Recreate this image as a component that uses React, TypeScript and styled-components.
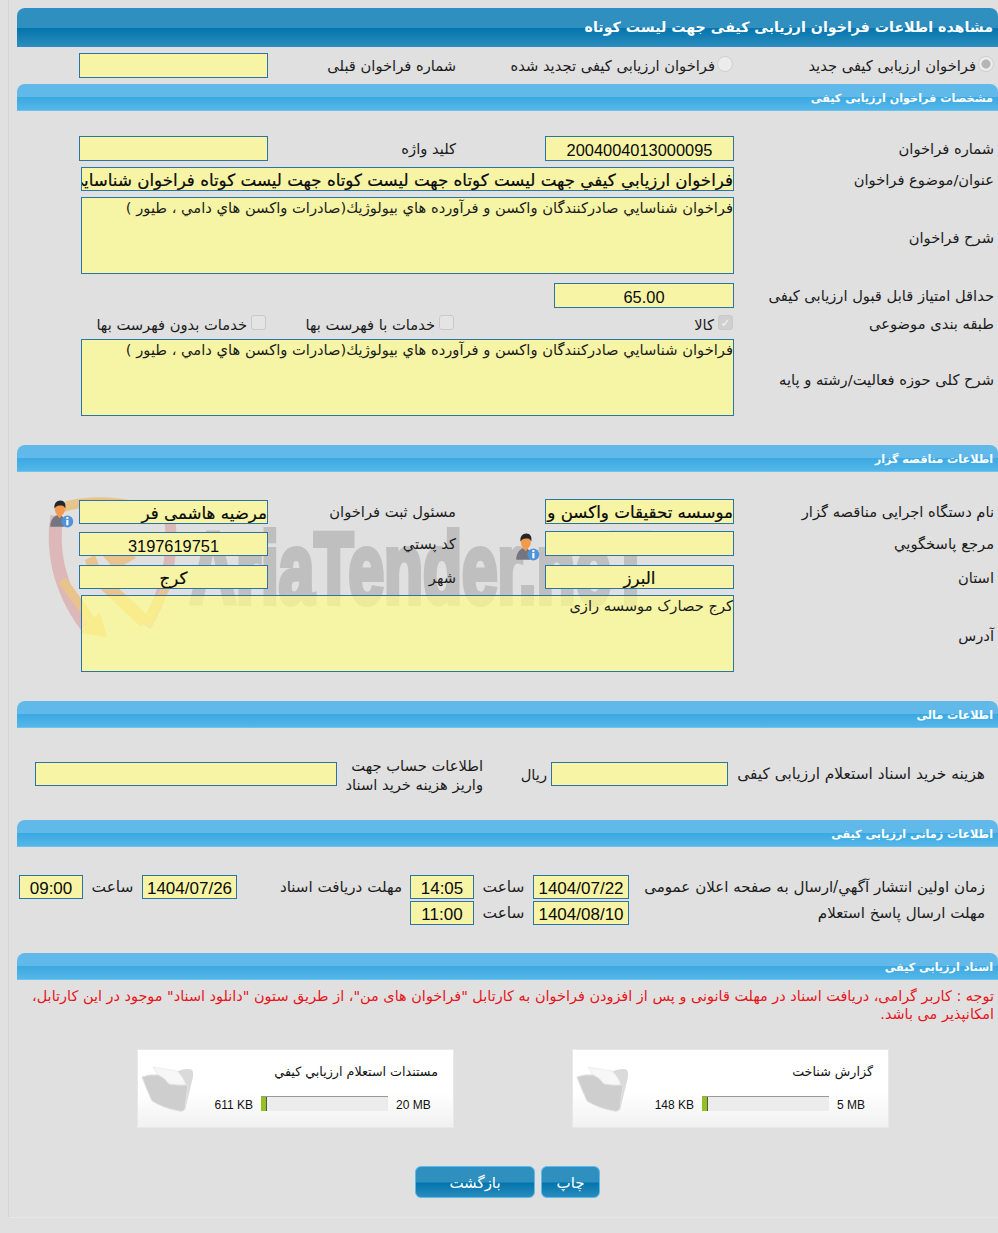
import React from "react";
import styled, { createGlobalStyle } from "styled-components";

const Global = createGlobalStyle`
  html, body { margin: 0; padding: 0; background: #e0e0e0; }
  body { font-family: "DejaVu Sans", sans-serif; }
  * { box-sizing: border-box; }
`;

const Page = styled.div`
  position: relative;
  isolation: isolate;
  width: 998px;
  height: 1233px;
  padding: 8px 0 0 17px;
  direction: rtl;
  overflow: hidden;
  &::before {
    content: "";
    position: absolute;
    left: 8px;
    top: 0;
    bottom: 16px;
    width: 1px;
    background: #d4d4d4;
  }
  &::after {
    content: "";
    position: absolute;
    left: 8px;
    right: 0;
    top: 1217px;
    height: 1px;
    background: #e6e6e6;
  }
`;

const MainTitle = styled.h1`
  margin: 0;
  height: 39px;
  padding: 0 5px 0 0;
  border-radius: 8px 8px 0 0;
  border-top: 1px solid #2f8ccd;
  border-bottom: 1px solid #2f8ccd;
  background: linear-gradient(#2f8fbf 0, #2f8fbf 19px, #0274ad 19px, #2b8cbd 100%);
  color: #fff;
  font: bold 14.2px/36px "DejaVu Sans", sans-serif;
`;

const SectionBar = styled.h2<{ $mt: number }>`
  margin: ${(p) => p.$mt}px 0 0;
  height: 27px;
  padding: 0 5px 0 0;
  border-radius: 8px 8px 0 0;
  border-bottom: 1px solid #6cc4ee;
  background: linear-gradient(#60b9e9 0, #60b9e9 13px, #3aa9e2 13px, #55b6e8 100%);
  color: #fff;
  font: bold 11.2px/29px "DejaVu Sans", sans-serif;
`;

const Row = styled.div<{ $mt: number; $h: number }>`
  display: grid;
  grid-template-columns: 264px 189px 277px 189px 62px;
  grid-template-rows: ${(p) => p.$h}px;
  margin-top: ${(p) => p.$mt}px;
  align-items: center;
`;

const WideRow = styled.div<{ $mt: number; $h: number }>`
  display: grid;
  grid-template-columns: 264px 653px;
  grid-template-rows: ${(p) => p.$h}px;
  margin-top: ${(p) => p.$mt}px;
  align-items: center;
`;

const Label = styled.div`
  padding: 2px 4px 0 0;
  font: 14.7px/1 "DejaVu Sans", sans-serif;
  color: #1c1c1c;
  white-space: nowrap;
`;

const TopLabel = styled(Label)`
  padding: 1px 0 0;
`;

const AreaLabel = styled(Label)`
  padding-top: 5px;
`;

const MidLabel = styled(Label)`
  padding-right: 89px;
`;

const Field = styled.div<{ $center?: boolean; $strong?: boolean; $w?: number; $h?: number; $align?: string }>`
  width: ${(p) => (p.$w ? `${p.$w}px` : "100%")};
  height: ${(p) => p.$h ?? 25}px;
  align-self: ${(p) => p.$align ?? "center"};
  border: 1px solid #2a74a8;
  background: #f7f5a5;
  overflow: hidden;
  white-space: nowrap;
  text-align: ${(p) => (p.$center ? "center" : "right")};
  font: ${(p) => (p.$strong ? '16.7px/25px "DejaVu Sans"' : '16.4px/27px "Liberation Sans"')}, "DejaVu Sans", sans-serif;
  -webkit-text-stroke: ${(p) => (p.$strong ? "0.2px #000" : "0")};
  color: #0a0a0a;
`;

const TimeField = styled(Field)`
  font-size: 17px;
  line-height: 26px;
`;

const Area = styled.div`
  height: 77px;
  border: 1px solid #2a74a8;
  background: rgba(255, 254, 140, 0.7);
  font: 14.7px/20px "DejaVu Sans", sans-serif;
  color: #1c1c1c;
  overflow: hidden;
`;

const FieldWithIcon = styled.div`
  position: relative;
`;

const PersonBadge = styled.svg<{ $top: number }>`
  position: absolute;
  left: -32px;
  top: ${(p) => p.$top}px;
  width: 30px;
  height: 28px;
`;

const RadioRow = styled.div`
  display: grid;
  grid-template-columns: 264px 278px 188px 189px;
  grid-template-rows: 25px;
  margin-top: 6px;
  align-items: center;
`;

const Choice = styled.label<{ $pad?: number; $dy: number }>`
  display: flex;
  align-items: center;
  padding: ${(p) => p.$dy}px ${(p) => p.$pad ?? 1}px 0 0;
  font: 14.7px/1 "DejaVu Sans", sans-serif;
  color: #1c1c1c;
  white-space: nowrap;
`;

const Radio = styled.span<{ $on?: boolean }>`
  flex: none;
  width: 16px;
  height: 16px;
  margin: 0 0 4px 2px;
  border-radius: 50%;
  border: 1px solid #cfcfcf;
  background: ${(p) => (p.$on ? "radial-gradient(circle, #b5b5b5 0 4px, #ececec 5px)" : "#ececec")};
`;

const CheckRow = styled.div`
  display: grid;
  grid-template-columns: 264px 279px 188px 186px;
  grid-template-rows: 15px;
  margin-top: 8px;
  align-items: center;
`;

const Check = styled.span<{ $on?: boolean }>`
  display: inline-flex;
  align-items: center;
  justify-content: center;
  flex: none;
  width: 15px;
  height: 15px;
  margin: 0 0 5px 4px;
  border: 1px solid #c9c9c9;
  border-radius: 3px;
  background: ${(p) => (p.$on ? "#d0d0d0" : "#e4e4e4")};
  color: #f4f4f4;
  font: bold 12px/1 "DejaVu Sans", sans-serif;
`;

const PriceRow = styled.div`
  display: grid;
  grid-template-columns: 270px 177px 68px 146px 302px;
  grid-template-rows: 24px;
  margin-top: 34px;
  align-items: center;
`;

const PriceLabel = styled(Label)`
  padding-right: 13px;
  font-size: 15.4px;
`;

const UnitLabel = styled(Label)`
  padding-right: 4px;
`;

const TwoLine = styled.div`
  padding-top: 2px;
  font: 14.7px/19px "DejaVu Sans", sans-serif;
  color: #1c1c1c;
  white-space: nowrap;
`;

const TimeRow = styled.div<{ $mt: number }>`
  display: grid;
  grid-template-columns: 369px 96px 59px 64px 173px 95px 59px 64px;
  grid-template-rows: 24px;
  margin-top: ${(p) => p.$mt}px;
  align-items: center;
`;

const TimeLabel = styled(Label)`
  padding-right: 13px;
  font-size: 15.1px;
`;

const MidTimeLabel = styled(Label)`
  padding-right: 8px;
  font-size: 15.1px;
`;

const Suffix = styled(Label)`
  padding-right: 0;
  text-align: center;
  font-size: 15.4px;
`;

const Alert = styled.p`
  margin: 7px 4px 0 0;
  font: 14.45px/18px "DejaVu Sans", sans-serif;
  color: #e8141a;
`;

const Cards = styled.div`
  display: flex;
  gap: 118px;
  margin-top: 26px;
  padding-right: 109px;
`;

const Card = styled.div`
  position: relative;
  width: 317px;
  height: 79px;
  background: linear-gradient(#fff 0, #fff 55%, #f1f1f1 100%);
  border: 1px solid #e8e8e8;
  padding: 14px 15px 0 0;
`;

const CardTitle = styled.div`
  font: 12.7px/16px "DejaVu Sans", sans-serif;
  color: #111;
`;

const Quota = styled.div`
  position: absolute;
  left: 0;
  right: 0;
  top: 46px;
  display: flex;
  align-items: center;
  justify-content: flex-end;
  direction: ltr;
  height: 15px;
  font: 12px/15px "Liberation Sans", sans-serif;
  color: #111;
`;

const QuotaUsed = styled.span`
  margin: 3px 8px 0 0;
`;

const QuotaMax = styled.span<{ $w: number }>`
  margin: 3px 0 0 8px;
  width: ${(p) => p.$w}px;
`;

const Bar = styled.div`
  display: flex;
  width: 127px;
  height: 15px;
  background: #ececec;
  border-top: 1px solid #999;
`;

const BarFill = styled.div`
  height: 100%;
  background: #94c11f;
  border-right: 1px solid #555;
`;

const FolderIcon = styled.svg`
  position: absolute;
  left: 3px;
  top: 16px;
  width: 52px;
  height: 46px;
`;

const Buttons = styled.div`
  display: flex;
  gap: 6px;
  margin-top: 38px;
  padding-right: 398px;
`;

const Button = styled.button<{ $w: number }>`
  width: ${(p) => p.$w}px;
  height: 32px;
  padding: 2px 0 0;
  border: 1px solid #5bbce8;
  border-radius: 6px;
  background: linear-gradient(#2f8fbf 0, #2f8fbf 15px, #0274ad 16px, #2b8cbd 100%);
  color: #fff;
  font: 15px/1 "DejaVu Sans", sans-serif;
`;

const Watermark = styled.svg`
  position: absolute;
  left: 40px;
  top: 490px;
  width: 640px;
  height: 160px;
  z-index: -1;
  direction: ltr;
`;

const WatermarkText = styled.text`
  font: bold 100px "Liberation Sans", sans-serif;
  fill: #bfbfbf;
  stroke: #bfbfbf;
  stroke-width: 6px;
`;

const Person = ({ top = 0 }: { top?: number }) => (
  <PersonBadge $top={top} viewBox="0 0 28 26">
    <path d="M3 25c0-6 3-10 7-11h3l3 3v8z" fill="#75757f" />
    <path d="M9 14l3 3 2-3-1-1h-3z" fill="#f0a050" />
    <ellipse cx="12" cy="9" rx="4.6" ry="5.6" fill="#f49a4e" />
    <path d="M7 8c-.6-5 2-7.5 5.5-7.5S18 3.500 17 8c-1-2.500-2-3-5-3s-4 1.500-5 3z" fill="#26262a" />
    <circle cx="19" cy="20" r="5.500" fill="#4f94d8" />
    <rect x="18" y="18.500" width="2" height="5" fill="#fff" />
    <rect x="18" y="15.800" width="2" height="1.800" fill="#fff" />
  </PersonBadge>
);

const Folder = () => (
  <FolderIcon viewBox="0 0 52 46">
    <path d="M36 6C40 3 48 2 51 4 53 7 52 12 50 19L44 44 30 20Z" fill="#dadada" />
    <path d="M12 1 36 5Q42 10 45 19H27Q22 11 17 9Z" fill="#f7f7f7" stroke="#e4e4e4" strokeWidth="0.6" />
    <path d="M1 11Q9 8 17 9 23 11 28 18 38 20 47 19L44 42Q43 46 38 45 22 42 11 35 5 22 1 11Z" fill="#cecece" stroke="#e2e2e2" strokeWidth="1" />
  </FolderIcon>
);

export default function App() {
  return (
    <Page>
      <Global />
      <Watermark viewBox="40 490 640 160">
        <path d="M57 516C52 545 56 585 86 626" fill="none" stroke="#dcb8b8" strokeWidth="13" />
        <path d="M60 508c30-10 80-8 112 14" fill="none" stroke="#e8c48c" strokeWidth="10" />
        <path d="M170 520c4 36-4 72-24 106" fill="none" stroke="#dcb8b8" strokeWidth="11" />
        <path d="M92 572l53 50" fill="none" stroke="#e8c48c" strokeWidth="13" />
        <path d="M146 624l22-40" fill="none" stroke="#e8c48c" strokeWidth="8" />
        <path d="M85 560l10-5 9 24-11 10z" fill="#e8c48c" />
        <path d="M98 550l19-13 19 21-21 12z" fill="#e8c48c" />
        <path d="M62 580l32 44" fill="none" stroke="#e8c48c" strokeWidth="9" />
        <path d="M100 612l7 25-27-4z" fill="#e8c48c" />
        <WatermarkText x="190" y="603" textLength="460" lengthAdjust="spacingAndGlyphs">AriaTender.neT</WatermarkText>
      </Watermark>

      <MainTitle>مشاهده اطلاعات فراخوان ارزیابی کیفی جهت لیست کوتاه</MainTitle>

      <RadioRow>
        <Choice $pad={4} $dy={1}><Radio $on />فراخوان ارزیابی کیفی جدید</Choice>
        <Choice $dy={1}><Radio />فراخوان ارزیابی کیفی تجدید شده</Choice>
        <TopLabel>شماره فراخوان قبلی</TopLabel>
        <Field />
      </RadioRow>

      <SectionBar $mt={6}>مشخصات فراخوان ارزیابی کیفی</SectionBar>

      <Row $mt={25} $h={25}>
        <Label>شماره فراخوان</Label>
        <Field $center>2004004013000095</Field>
        <MidLabel>کلید واژه</MidLabel>
        <Field />
      </Row>
      <WideRow $mt={6} $h={24}>
        <Label>عنوان/موضوع فراخوان</Label>
        <Field $strong $h={24}>فراخوان ارزيابي كيفي جهت ليست كوتاه جهت ليست كوتاه جهت ليست كوتاه فراخوان شناسايي صادركنندگان</Field>
      </WideRow>
      <WideRow $mt={6} $h={77}>
        <AreaLabel>شرح فراخوان</AreaLabel>
        <Area>فراخوان شناسايي صادرکنندگان واكسن و فرآورده هاي بيولوژيك(صادرات واكسن هاي دامي ، طيور )</Area>
      </WideRow>
      <Row $mt={9} $h={25}>
        <Label>حداقل امتیاز قابل قبول ارزیابی کیفی</Label>
        <Field $center $w={180}>65.00</Field>
      </Row>
      <CheckRow>
        <Label>طبقه بندی موضوعی</Label>
        <Choice $dy={3}><Check $on>✓</Check>کالا</Choice>
        <Choice $dy={3}><Check />خدمات با فهرست بها</Choice>
        <Choice $dy={3}><Check />خدمات بدون فهرست بها</Choice>
      </CheckRow>
      <WideRow $mt={8} $h={77}>
        <AreaLabel>شرح کلی حوزه فعالیت/رشته و پایه</AreaLabel>
        <Area>فراخوان شناسايي صادرکنندگان واكسن و فرآورده هاي بيولوژيك(صادرات واكسن هاي دامي ، طيور )</Area>
      </WideRow>

      <SectionBar $mt={29}>اطلاعات مناقصه گزار</SectionBar>

      <Row $mt={27} $h={25}>
        <Label>نام دستگاه اجرایی مناقصه گزار</Label>
        <Field $strong>موسسه تحقيقات واكسن و سرم سازي رازي</Field>
        <MidLabel>مسئول ثبت فراخوان</MidLabel>
        <FieldWithIcon>
          <Field $strong $h={24}>مرضیه هاشمی فر</Field>
          <Person />
        </FieldWithIcon>
      </Row>
      <Row $mt={7} $h={25}>
        <Label>مرجع پاسخگويي</Label>
        <FieldWithIcon>
          <Field />
          <Person top={2} />
        </FieldWithIcon>
        <MidLabel>کد پستي</MidLabel>
        <Field $center $h={24} $align="end">3197619751</Field>
      </Row>
      <Row $mt={9} $h={24}>
        <Label>استان</Label>
        <Field $center $strong $h={24}>البرز</Field>
        <MidLabel>شهر</MidLabel>
        <Field $center $strong $h={24}>کرج</Field>
      </Row>
      <WideRow $mt={6} $h={77}>
        <AreaLabel>آدرس</AreaLabel>
        <Area>کرج حصارک موسسه رازی</Area>
      </WideRow>

      <SectionBar $mt={29}>اطلاعات مالی</SectionBar>

      <PriceRow>
        <PriceLabel>هزینه خرید اسناد استعلام ارزیابی کیفی</PriceLabel>
        <Field $h={24} />
        <UnitLabel>ریال</UnitLabel>
        <TwoLine>اطلاعات حساب جهت<br />واریز هزینه خرید اسناد</TwoLine>
        <Field $h={24} />
      </PriceRow>

      <SectionBar $mt={34}>اطلاعات زمانی ارزیابی کیفی</SectionBar>

      <TimeRow $mt={28}>
        <TimeLabel>زمان اولین انتشار آگهي/ارسال به صفحه اعلان عمومی</TimeLabel>
        <TimeField $center $h={24}>1404/07/22</TimeField>
        <Suffix>ساعت</Suffix>
        <TimeField $center $h={24}>14:05</TimeField>
        <MidTimeLabel>مهلت دریافت اسناد</MidTimeLabel>
        <TimeField $center $h={24}>1404/07/26</TimeField>
        <Suffix>ساعت</Suffix>
        <TimeField $center $h={24}>09:00</TimeField>
      </TimeRow>
      <TimeRow $mt={2}>
        <TimeLabel>مهلت ارسال پاسخ استعلام</TimeLabel>
        <TimeField $center $h={24}>1404/08/10</TimeField>
        <Suffix>ساعت</Suffix>
        <TimeField $center $h={24}>11:00</TimeField>
      </TimeRow>

      <SectionBar $mt={28}>اسناد ارزیابی کیفی</SectionBar>

      <Alert>توجه : کاربر گرامی، دریافت اسناد در مهلت قانونی و پس از افزودن فراخوان به کارتابل "فراخوان های من"، از طریق ستون "دانلود اسناد" موجود در این کارتابل، امکانپذیر می باشد.</Alert>

      <Cards>
        <Card>
          <CardTitle>گزارش شناخت</CardTitle>
          <Quota>
            <QuotaUsed>148 KB</QuotaUsed>
            <Bar><BarFill style={{ width: 6 }} /></Bar>
            <QuotaMax $w={51}>5 MB</QuotaMax>
          </Quota>
          <Folder />
        </Card>
        <Card>
          <CardTitle>مستندات استعلام ارزیابي کیفي</CardTitle>
          <Quota>
            <QuotaUsed>611 KB</QuotaUsed>
            <Bar><BarFill style={{ width: 6 }} /></Bar>
            <QuotaMax $w={57}>20 MB</QuotaMax>
          </Quota>
          <Folder />
        </Card>
      </Cards>

      <Buttons>
        <Button $w={59}>چاپ</Button>
        <Button $w={120}>بازگشت</Button>
      </Buttons>
    </Page>
  );
}
